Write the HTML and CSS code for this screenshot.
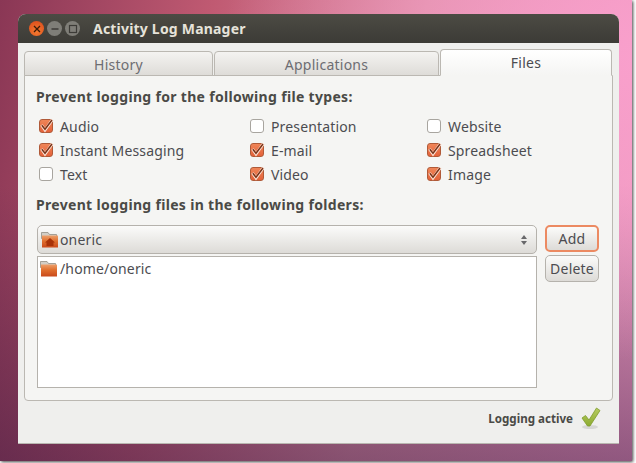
FILE: index.html
```html
<!DOCTYPE html>
<html lang="en">
<head>
<meta charset="utf-8">
<title>Activity Log Manager</title>
<link rel="stylesheet" href="styles.css">
</head>
<body>
<svg class="defs" width="0" height="0" aria-hidden="true">
  <defs>
    <linearGradient id="folderFront" x1="0" y1="0" x2="0" y2="1">
      <stop offset="0" stop-color="#eda06c"/>
      <stop offset=".45" stop-color="#e0702f"/>
      <stop offset="1" stop-color="#c9491a"/>
    </linearGradient>
    <linearGradient id="tickFill" x1="0" y1="0" x2="0" y2="1">
      <stop offset="0" stop-color="#b7cc62"/>
      <stop offset="1" stop-color="#8cab30"/>
    </linearGradient>
  </defs>
</svg>
<div class="desktop">
  <div class="window">
    <header class="titlebar">
      <div class="controls">
        <span class="wbtn close"><svg viewBox="0 0 10 10" width="10" height="10"><path d="M2 2l6 6M8 2l-6 6" stroke="#3a1a08" stroke-width="1.3"/></svg></span>
        <span class="wbtn min"><svg viewBox="0 0 10 10" width="10" height="10"><path d="M1.500 5h7" stroke="#3c3b37" stroke-width="1.300"/></svg></span>
        <span class="wbtn max"><svg viewBox="0 0 10 10" width="10" height="10"><rect x="1.500" y="1.500" width="7" height="7" fill="none" stroke="#3c3b37" stroke-width="1.200"/></svg></span>
      </div>
      <span class="wtitle">Activity Log Manager</span>
    </header>
    <div class="content">
      <div class="tabs">
        <div class="tab tab-history">History</div>
        <div class="tab tab-apps">Applications</div>
        <div class="tab tab-files">Files</div>
      </div>
      <section class="panel">
        <h2 class="heading">Prevent logging for the following file types:</h2>
        <div class="types">
          <label class="opt"><span class="cb on"><svg viewBox="0 0 14 14"><path d="M2.500 6l3.500 5L13.500 .5" fill="none" stroke="#fbe3d6" stroke-width="3"/><path d="M2.800 6.200l3.200 4L13 1" fill="none" stroke="#7a3318" stroke-width="1.500"/></svg></span>Audio</label>
          <label class="opt"><span class="cb"></span>Presentation</label>
          <label class="opt"><span class="cb"></span>Website</label>
          <label class="opt"><span class="cb on"><svg viewBox="0 0 14 14"><path d="M2.500 6l3.500 5L13.500 .5" fill="none" stroke="#fbe3d6" stroke-width="3"/><path d="M2.800 6.200l3.200 4L13 1" fill="none" stroke="#7a3318" stroke-width="1.500"/></svg></span>Instant Messaging</label>
          <label class="opt"><span class="cb on"><svg viewBox="0 0 14 14"><path d="M2.500 6l3.500 5L13.500 .5" fill="none" stroke="#fbe3d6" stroke-width="3"/><path d="M2.800 6.200l3.200 4L13 1" fill="none" stroke="#7a3318" stroke-width="1.500"/></svg></span>E-mail</label>
          <label class="opt"><span class="cb on"><svg viewBox="0 0 14 14"><path d="M2.500 6l3.500 5L13.500 .5" fill="none" stroke="#fbe3d6" stroke-width="3"/><path d="M2.800 6.200l3.200 4L13 1" fill="none" stroke="#7a3318" stroke-width="1.500"/></svg></span>Spreadsheet</label>
          <label class="opt"><span class="cb"></span>Text</label>
          <label class="opt"><span class="cb on"><svg viewBox="0 0 14 14"><path d="M2.500 6l3.500 5L13.500 .5" fill="none" stroke="#fbe3d6" stroke-width="3"/><path d="M2.800 6.200l3.200 4L13 1" fill="none" stroke="#7a3318" stroke-width="1.500"/></svg></span>Video</label>
          <label class="opt"><span class="cb on"><svg viewBox="0 0 14 14"><path d="M2.500 6l3.500 5L13.500 .5" fill="none" stroke="#fbe3d6" stroke-width="3"/><path d="M2.800 6.200l3.200 4L13 1" fill="none" stroke="#7a3318" stroke-width="1.500"/></svg></span>Image</label>
        </div>
        <h2 class="heading second">Prevent logging files in the following folders:</h2>
        <div class="folders">
          <div class="left">
            <div class="combo">
              <svg class="ficon" viewBox="0 0 18 16" width="18" height="16"><path d="M.5 .5h6.500l1.500 2H15.500v4H.5z" fill="#d2cec6" stroke="#938e84" stroke-width=".8"/><rect x="1" y="3.500" width="16" height="12" fill="url(#folderFront)"/><path d="M9 6l-5 4.500h1.500v3.500h7v-3.500H14z" fill="#a83208"/></svg>
              <span class="combo-text">oneric</span>
              <svg class="spin" viewBox="0 0 8 16" width="8" height="16"><path d="M4 3l3 4H1zM4 13l3-4H1z" fill="#68686a"/></svg>
            </div>
            <div class="list">
              <div class="row">
                <svg class="ficon" viewBox="0 0 18 16" width="18" height="16"><path d="M.5 .5h6.500l1.500 2H15.500v4H.5z" fill="#d2cec6" stroke="#938e84" stroke-width=".8"/><rect x="1" y="3.500" width="16" height="12" fill="url(#folderFront)"/></svg>
                <span>/home/oneric</span>
              </div>
            </div>
          </div>
          <div class="buttons">
            <button class="btn btn-add" type="button">Add</button>
            <button class="btn" type="button">Delete</button>
          </div>
        </div>
      </section>
      <footer class="status">
        <span class="status-text">Logging active</span>
        <svg class="tick" viewBox="0 0 22 24" width="22" height="24"><ellipse cx="10" cy="21" rx="8" ry="2" fill="#000" opacity=".1"/><path d="M2 12l3.500-2.500L9 14 16.500 2 20 4.500 10 20H7.500z" fill="url(#tickFill)" stroke="#7f9c2c" stroke-width=".8"/></svg>
      </footer>
    </div>
  </div>
</div>
</body>
</html>
```
FILE: styles.css
```css
html, body { margin: 0; padding: 0; background: #fff; }
body { width: 636px; height: 463px; overflow: hidden; font-family: "Noto Sans", sans-serif; color: #4c4c4c; }
.defs { display: block; height: 0; }
.desktop {
  width: 632px; height: 461px; box-sizing: border-box; padding: 14px 0 0 18px;
  box-shadow: 1px 1px 3px rgba(0,0,0,.75);
  background:
    radial-gradient(ellipse 420px 300px at 640px 60px, rgba(250,160,205,.95), rgba(250,160,205,0) 100%),
    linear-gradient(180deg, rgba(0,0,0,0) 40%, rgba(50,20,60,.5) 100%),
    linear-gradient(100deg, #8a3755 0%, #c05a72 30%, #dc8ea4 60%, #f09cc4 100%);
}
.window { width: 601px; height: 429px; border-radius: 8px 8px 0 0; overflow: hidden; background: #efefed; display: flex; flex-direction: column; box-shadow: 0 1px 0 #b9b6b0; }
.titlebar { height: 29px; flex: none; display: flex; align-items: center; padding-left: 11px; background: linear-gradient(#4c4b44, #3c3b36); }
.controls { display: flex; gap: 3px; width: 64px; }
.wbtn { width: 15px; height: 15px; border-radius: 50%; display: flex; align-items: center; justify-content: center; background: #7f7e78; }
.wbtn.close { background: radial-gradient(circle at 50% 70%, #f47a30, #d8481a); }
.wtitle { color: #e6e3da; font-weight: 700; font-size: 14px; letter-spacing: .2px; }
.content { flex: 1; position: relative; padding: 6px 6px 0 6px; display: flex; flex-direction: column; }
.tabs { display: flex; align-items: flex-end; height: 27px; gap: 1px; position: relative; z-index: 1; margin-bottom: -1px; }
.tab { box-sizing: border-box; height: 25px; padding-top: 1px; display: flex; align-items: center; justify-content: center; font-size: 14px; letter-spacing: .25px; color: #6d6d72; background: linear-gradient(#f4f3f1, #dedcd8); border: 1px solid #bbb8b2; border-radius: 4px 4px 0 0; }
.tab-history { width: 189px; }
.tab-apps { width: 225px; }
.tab-files { width: 172px; height: 27px; padding-top: 0; color: #4c4c50; background: linear-gradient(#fff, #f5f5f3); border-bottom-color: #f5f5f3; }
.panel { box-sizing: border-box; height: 326px; background: #f5f5f3; border: 1px solid #bbb8b2; border-radius: 0 0 4px 4px; padding: 12px 12px 0 11px; }
.heading { margin: 0; font-size: 14px; line-height: 18px; font-weight: 700; letter-spacing: .32px; color: #4a4a46; }
.heading.second { margin-top: 10px; }
.types { display: grid; grid-template-columns: 211px 177px 1fr; grid-auto-rows: 24px; margin-top: 8px; padding-left: 3px; }
.opt { display: flex; align-items: center; font-size: 14px; letter-spacing: .15px; color: #4c4c50; }
.cb { box-sizing: border-box; width: 14px; height: 14px; flex: none; margin-right: 7px; background: #fff; border: 1px solid #a8a59f; border-radius: 3px; }
.cb.on { background: linear-gradient(#ef8558, #e4623a); border-color: #b05a38; }
.cb svg { display: block; width: 14px; height: 14px; margin: -1px; overflow: visible; }
.folders { display: flex; margin-top: 11px; padding-left: 1px; }
.left { width: 500px; display: flex; flex-direction: column; gap: 2px; }
.combo { box-sizing: border-box; height: 29px; display: flex; align-items: center; gap: 1px; padding: 0 8px 0 3px; font-size: 14px; letter-spacing: .15px; color: #4c4c50; border: 1px solid #b5b2ac; border-radius: 5px; background: linear-gradient(#fbfbfa, #dddbd7); }
.combo-text { flex: 1; }
.ficon { flex: none; }
.list { box-sizing: border-box; height: 132px; background: #fff; border: 1px solid #b5b2ac; padding: 2px 2px; font-size: 14px; letter-spacing: .15px; color: #4c4c50; }
.row { display: flex; align-items: center; gap: 2px; height: 19px; }
.buttons { display: flex; flex-direction: column; gap: 3px; margin-left: 8px; width: 54px; }
.btn { box-sizing: border-box; height: 27px; padding: 0; font: inherit; font-size: 14px; letter-spacing: .2px; color: #4c4c50; border: 1px solid #b5b2ac; border-radius: 5px; background: linear-gradient(#fbfbfa, #dddbd7); }
.btn-add { border: 2px solid #ec8a62; }
.status { display: flex; align-items: center; justify-content: flex-end; height: 32px; padding-right: 11px; margin-top: 1px; }
.status-text { font-size: 11.6px; font-weight: 700; color: #4a4a46; margin-right: 7px; }
.tick { flex: none; }
```
